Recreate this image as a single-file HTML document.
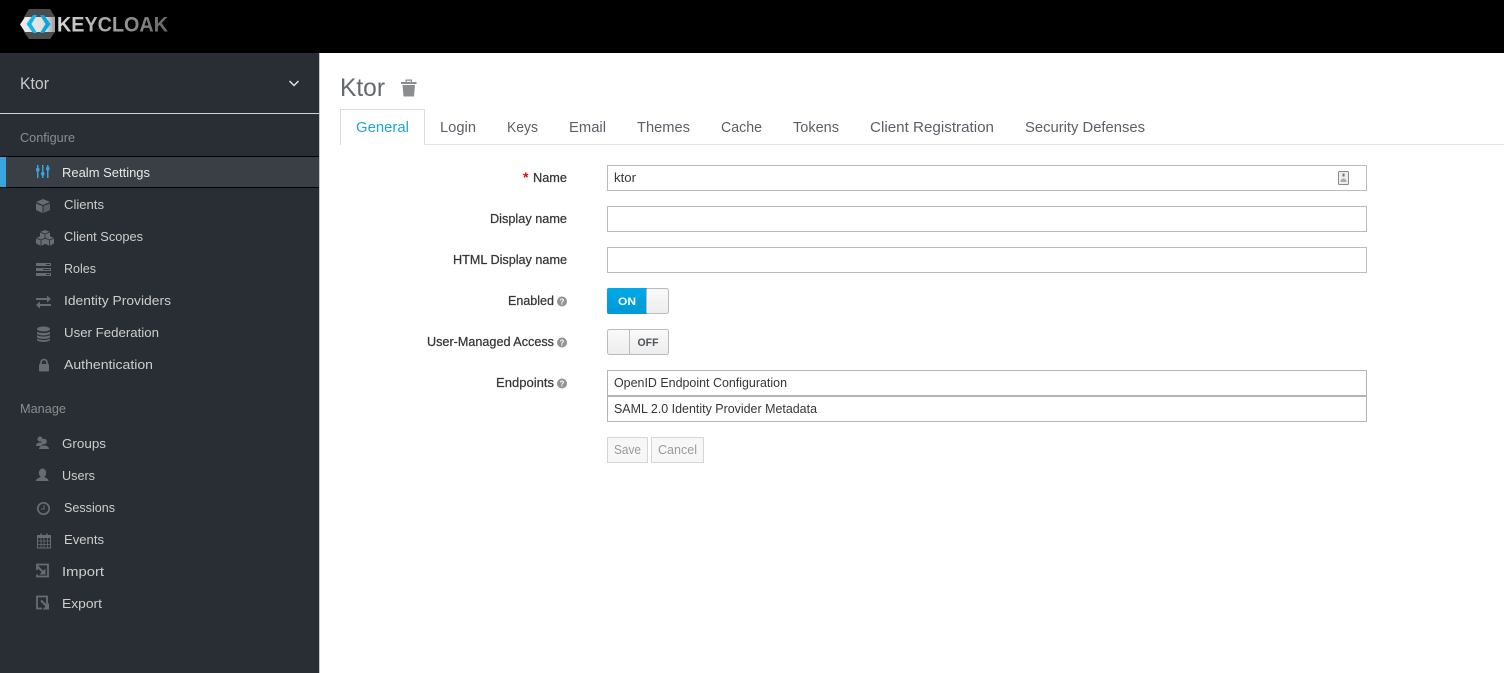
<!DOCTYPE html>
<html lang="en"><head><meta charset="utf-8"><title>Keycloak Realm Settings</title>
<style>
html,body{margin:0;padding:0;width:1504px;height:673px;overflow:hidden;background:#fff}
svg{display:block}
text{font-family:"Liberation Sans",sans-serif;font-size:13px}
.nav{fill:#cdcdcd}
.lab{fill:#363636;font-weight:400;stroke:#363636;stroke-width:.25px}
.tab{fill:#5b6066;font-size:15px}
.val{fill:#363636}
.ic{fill:#686c71}
.ics{fill:none;stroke:#686c71}
</style></head><body>
<svg width="1504" height="673" viewBox="0 0 1504 673" xmlns="http://www.w3.org/2000/svg">
<defs>
<linearGradient id="kc" x1="0" x2="1" y1="0" y2="0"><stop offset="0" stop-color="#d8d8d8"/><stop offset=".5" stop-color="#a0a0a0"/><stop offset="1" stop-color="#666"/></linearGradient>
<linearGradient id="band" x1="0" x2="1" y1="0" y2="0"><stop offset="0" stop-color="#eee"/><stop offset=".75" stop-color="#ddd"/><stop offset="1" stop-color="#999"/></linearGradient>
<linearGradient id="on" x1="0" x2="0" y1="0" y2="1"><stop offset="0" stop-color="#00a9e6"/><stop offset="1" stop-color="#0099d6"/></linearGradient>
<linearGradient id="off" x1="0" x2="0" y1="0" y2="1"><stop offset="0" stop-color="#fafafa"/><stop offset="1" stop-color="#ededed"/></linearGradient>
</defs>
<rect x="0" y="0" width="1504" height="53" fill="#000"/>
<!-- logo -->
<polygon points="29,9 50,9 55,17 55,32 50,39 29,39 24,32 24,17" fill="#4a4d50"/>
<polygon points="25,17 55,17 55,32 25,32 20,24.500" fill="url(#band)"/>
<polygon points="33,15 37,15 31.500,24 37,33 33,33 26.500,24" fill="#13b5ea"/>
<polygon points="44,15 40,15 45.500,24 40,33 44,33 50.500,24" fill="#0aa5dd"/>
<text x="57" y="31.500" style="font-size:21.500px;font-weight:700" fill="url(#kc)" textLength="111" lengthAdjust="spacingAndGlyphs">KEYCLOAK</text>

<!-- sidebar -->
<rect x="0" y="53" width="319" height="620" fill="#292e34"/>
<rect x="319" y="53" width="1" height="620" fill="#c8c8c8"/>
<text x="20" y="89" style="font-size:17px" fill="#c8c9ca" textLength="29" lengthAdjust="spacingAndGlyphs">Ktor</text>
<path d="M289.500 81 L294 85.500 L298.500 81" fill="none" stroke="#e0e0e0" stroke-width="1.500"/>
<rect x="0" y="113" width="319" height="1" fill="#d1d1d1"/>
<text x="20" y="142" style="fill:#8b8d8f" textLength="55" lengthAdjust="spacingAndGlyphs">Configure</text>
<rect x="0" y="157" width="319" height="30" fill="#393f44"/>
<rect x="0" y="156" width="319" height="1" fill="#030303"/>
<rect x="0" y="187" width="319" height="1" fill="#030303"/>
<rect x="0" y="157" width="6" height="30" fill="#39a5dc"/>
<!-- sliders -->
<g fill="#39a5dc"><rect x="37" y="165" width="1.500" height="13"/><rect x="42" y="165" width="1.500" height="13"/><rect x="47" y="165" width="1.500" height="13"/><rect x="36" y="168" width="3.500" height="3.500" rx="1"/><rect x="41" y="172" width="3.500" height="3.500" rx="1"/><rect x="46" y="167" width="3.500" height="3.500" rx="1"/></g>
<text x="62" y="177" style="fill:#e8e8e8" textLength="88" lengthAdjust="spacingAndGlyphs">Realm Settings</text>

<!-- clients cube -->
<polygon points="43,199 50,202 43,205 36,202" class="ic"/><polygon points="36,203.500 42.500,206 42.500,213 36,210" class="ic"/><polygon points="50,203.500 43.500,206 43.500,213 50,210" class="ic" opacity=".8"/>
<text x="64" y="209" class="nav" textLength="40" lengthAdjust="spacingAndGlyphs">Clients</text>
<!-- scopes cubes -->
<g class="ic"><polygon points="45,230 50,232 50,237 45,239 40,237 40,232"/><polygon points="41,236 46,238 46,243.500 41,246 36,243.500 36,238"/><polygon points="49.500,236 54,238 54,243.500 49.500,246 45,243.500 45,238"/></g>
<g fill="none" stroke="#292e34" stroke-width=".8"><path d="M40 232l5 2 5-2M45 234v5M36 238l5 2 5-2M41 240v6M45 238l4.500 2 4.500-2M49.500 240v6"/></g>
<text x="64" y="241" class="nav" textLength="79" lengthAdjust="spacingAndGlyphs">Client Scopes</text>
<!-- roles -->
<g class="ic"><rect x="36" y="263" width="15" height="3"/><rect x="36" y="268" width="15" height="3"/><rect x="36" y="273" width="15" height="3"/></g>
<g fill="#292e34"><rect x="46" y="264" width="4" height="1"/><rect x="43" y="269" width="7" height="1"/><rect x="46" y="274" width="4" height="1"/></g>
<text x="64" y="273" class="nav" textLength="32" lengthAdjust="spacingAndGlyphs">Roles</text>
<!-- idp -->
<g class="ic"><rect x="36" y="298" width="12" height="2"/><polygon points="47,295.500 51,299 47,302.500"/><rect x="39" y="304" width="12" height="2"/><polygon points="40,301.500 36,305 40,308.500"/></g>
<text x="64" y="305" class="nav" textLength="107" lengthAdjust="spacingAndGlyphs">Identity Providers</text>
<!-- db -->
<g class="ic"><ellipse cx="43.500" cy="329" rx="6.500" ry="2.500"/><path d="M37 331.500c1 2 12 2 13 0v2c-1 2.500-12 2.500-13 0zM37 335c1 2 12 2 13 0v2c-1 2.500-12 2.500-13 0zM37 338.500c1 2 12 2 13 0v1.500c-1 2.500-12 2.500-13 0z"/></g>
<text x="64" y="337" class="nav" textLength="95" lengthAdjust="spacingAndGlyphs">User Federation</text>
<!-- lock -->
<rect x="39" y="364" width="10" height="7.500" rx="1" class="ic"/><path d="M41 364.500v-2a3 3 0 0 1 6 0v2" class="ics" stroke-width="1.700"/>
<text x="64" y="369" class="nav" textLength="89" lengthAdjust="spacingAndGlyphs">Authentication</text>

<text x="20" y="413" style="fill:#8b8d8f" textLength="46" lengthAdjust="spacingAndGlyphs">Manage</text>
<!-- groups -->
<g class="ic"><circle cx="40" cy="439" r="2.500"/><path d="M36 446c0-2.500 2-3 3-3.500h2c1 .5 1.500 1 2 1.500l-2 2z"/><circle cx="44" cy="441.500" r="2.800"/><path d="M39 449c0-2.500 2.500-3 3.500-3.500h3c1 .5 3.500 1 3.500 3.500z"/></g>
<text x="62" y="448" class="nav" textLength="44" lengthAdjust="spacingAndGlyphs">Groups</text>
<!-- user -->
<g class="ic"><ellipse cx="42.500" cy="473" rx="3.700" ry="4.500"/><path d="M36 481c0-2.500 3-3 4.500-4h4c1.500 1 4 1.500 4 4z"/></g>
<text x="62" y="480" class="nav" textLength="33" lengthAdjust="spacingAndGlyphs">Users</text>
<!-- clock -->
<circle cx="43.500" cy="508.500" r="5.700" class="ics" stroke-width="1.700"/><path d="M44 505v4h-3" class="ics" stroke-width="1"/>
<text x="64" y="512" class="nav" textLength="51" lengthAdjust="spacingAndGlyphs">Sessions</text>
<!-- calendar -->
<path d="M37.500 535.500h13v12.500h-13z" class="ics" stroke-width="1"/><path d="M37.500 535h13v3h-13z" class="ic"/><path d="M41 533.500v3M47 533.500v3" class="ics" stroke-width="1.500"/><path d="M37.500 541h13M37.500 544.500h13M41 538v10M44 538v10M47.500 538v10" class="ics" stroke-width=".8"/>
<text x="64" y="544" class="nav" textLength="40" lengthAdjust="spacingAndGlyphs">Events</text>
<!-- import -->
<path d="M37 570v-5.500h11v12h-11v-2" class="ics" stroke-width="1.800"/><path d="M37 566l6 6" class="ics" stroke-width="2"/><polygon points="45.500,568.500 45.500,574.500 39.500,574.500" class="ic"/>
<text x="62" y="576" class="nav" textLength="42" lengthAdjust="spacingAndGlyphs">Import</text>
<!-- export -->
<path d="M47 606v-9.500h-10v12h5" class="ics" stroke-width="1.800"/><path d="M41 600.500l5.500 5.500" class="ics" stroke-width="2"/><polygon points="49,603 49,609.500 42.500,609.500" class="ic"/>
<text x="62" y="608" class="nav" textLength="40" lengthAdjust="spacingAndGlyphs">Export</text>

<!-- title -->
<text x="340" y="96" style="font-size:25px" fill="#65696e" textLength="45" lengthAdjust="spacingAndGlyphs">Ktor</text>
<g fill="#8b8d8f"><rect x="401" y="82" width="15.500" height="2"/><path d="M405.500 82v-2.500h6.500v2.500h-1.300v-1.300h-3.900v1.300z"/><path d="M402.500 85h12.500l-1 11.500h-10.500z"/></g>

<!-- tabs -->
<rect x="425" y="144" width="1079" height="1" fill="#e4e4e4"/>
<rect x="340" y="109.500" width="85" height="36" fill="#fff"/>
<path d="M340.500 145V109.500H424.500V145" fill="none" stroke="#dcdcdc"/>
<text x="356" y="132" class="tab" style="fill:#1ea5de" textLength="53" lengthAdjust="spacingAndGlyphs">General</text>
<text x="440" y="132" class="tab" textLength="36" lengthAdjust="spacingAndGlyphs">Login</text>
<text x="507" y="132" class="tab" textLength="31" lengthAdjust="spacingAndGlyphs">Keys</text>
<text x="569" y="132" class="tab" textLength="37" lengthAdjust="spacingAndGlyphs">Email</text>
<text x="637" y="132" class="tab" textLength="53" lengthAdjust="spacingAndGlyphs">Themes</text>
<text x="721" y="132" class="tab" textLength="41" lengthAdjust="spacingAndGlyphs">Cache</text>
<text x="793" y="132" class="tab" textLength="46" lengthAdjust="spacingAndGlyphs">Tokens</text>
<text x="870" y="132" class="tab" textLength="124" lengthAdjust="spacingAndGlyphs">Client Registration</text>
<text x="1025" y="132" class="tab" textLength="120" lengthAdjust="spacingAndGlyphs">Security Defenses</text>

<!-- labels -->
<text x="523" y="182" style="fill:#e00;font-size:14px;font-weight:700">*</text>
<text x="533" y="182" class="lab" textLength="34" lengthAdjust="spacingAndGlyphs">Name</text>
<text x="490" y="223" class="lab" textLength="77" lengthAdjust="spacingAndGlyphs">Display name</text>
<text x="453" y="264" class="lab" textLength="114" lengthAdjust="spacingAndGlyphs">HTML Display name</text>
<text x="508" y="305" class="lab" textLength="46" lengthAdjust="spacingAndGlyphs">Enabled</text>
<text x="427" y="346" class="lab" textLength="127" lengthAdjust="spacingAndGlyphs">User-Managed Access</text>
<text x="496" y="387" class="lab" textLength="58" lengthAdjust="spacingAndGlyphs">Endpoints</text>
<g>
<circle cx="562" cy="301.500" r="5" fill="#939393"/><text x="562" y="304.500" text-anchor="middle" style="font-size:8px;font-weight:700" fill="#fff">?</text>
<circle cx="562" cy="342.500" r="5" fill="#939393"/><text x="562" y="345.500" text-anchor="middle" style="font-size:8px;font-weight:700" fill="#fff">?</text>
<circle cx="562" cy="383.500" r="5" fill="#939393"/><text x="562" y="386.500" text-anchor="middle" style="font-size:8px;font-weight:700" fill="#fff">?</text>
</g>

<!-- inputs -->
<rect x="607.500" y="165.500" width="759" height="25" fill="#fff" stroke="#bbb"/>
<text x="614" y="182" class="val" textLength="22" lengthAdjust="spacingAndGlyphs">ktor</text>
<rect x="1338.500" y="171.500" width="10" height="13" rx="1" fill="#eee" stroke="#888"/>
<rect x="1342.500" y="173.500" width="2" height="3" fill="#777"/><path d="M1340.500 182c0-2.500 1.500-3.500 3-3.500s3 1 3 3.500z" fill="#aaa"/>
<rect x="607.500" y="206.500" width="759" height="25" fill="#fff" stroke="#bbb"/>
<rect x="607.500" y="247.500" width="759" height="25" fill="#fff" stroke="#bbb"/>

<!-- switches -->
<rect x="607.500" y="288.500" width="61" height="25" rx="2" fill="url(#off)" stroke="#bbb"/>
<path d="M609 288h38v26h-38a2 2 0 0 1-2-2v-22a2 2 0 0 1 2-2z" fill="url(#on)"/>
<rect x="646" y="289" width="1" height="24" fill="#bbb"/>
<text x="627" y="305" text-anchor="middle" style="font-size:11px;font-weight:700" fill="#fff" textLength="18" lengthAdjust="spacingAndGlyphs">ON</text>
<rect x="607.500" y="329.500" width="61" height="25" rx="2" fill="url(#off)" stroke="#bbb"/>
<rect x="629" y="330" width="1" height="24" fill="#bbb"/>
<text x="648" y="346" text-anchor="middle" style="font-size:11px;font-weight:700" fill="#4d5258" textLength="21" lengthAdjust="spacingAndGlyphs">OFF</text>

<!-- endpoints -->
<rect x="607.500" y="370.500" width="759" height="25" fill="#fff" stroke="#b4b4b4"/>
<text x="614" y="387" class="val" textLength="173" lengthAdjust="spacingAndGlyphs">OpenID Endpoint Configuration</text>
<rect x="607.500" y="396.500" width="759" height="25" fill="#fff" stroke="#b4b4b4"/>
<text x="614" y="413" class="val" textLength="203" lengthAdjust="spacingAndGlyphs">SAML 2.0 Identity Provider Metadata</text>

<!-- buttons -->
<rect x="607.500" y="437.500" width="40" height="25" fill="#f7f7f7" stroke="#d5d5d5"/>
<text x="614" y="454" style="fill:#9a9a9a" textLength="27" lengthAdjust="spacingAndGlyphs">Save</text>
<rect x="651.500" y="437.500" width="52" height="25" fill="#f7f7f7" stroke="#d5d5d5"/>
<text x="658" y="454" style="fill:#9a9a9a" textLength="39" lengthAdjust="spacingAndGlyphs">Cancel</text>
</svg>
</body></html>
